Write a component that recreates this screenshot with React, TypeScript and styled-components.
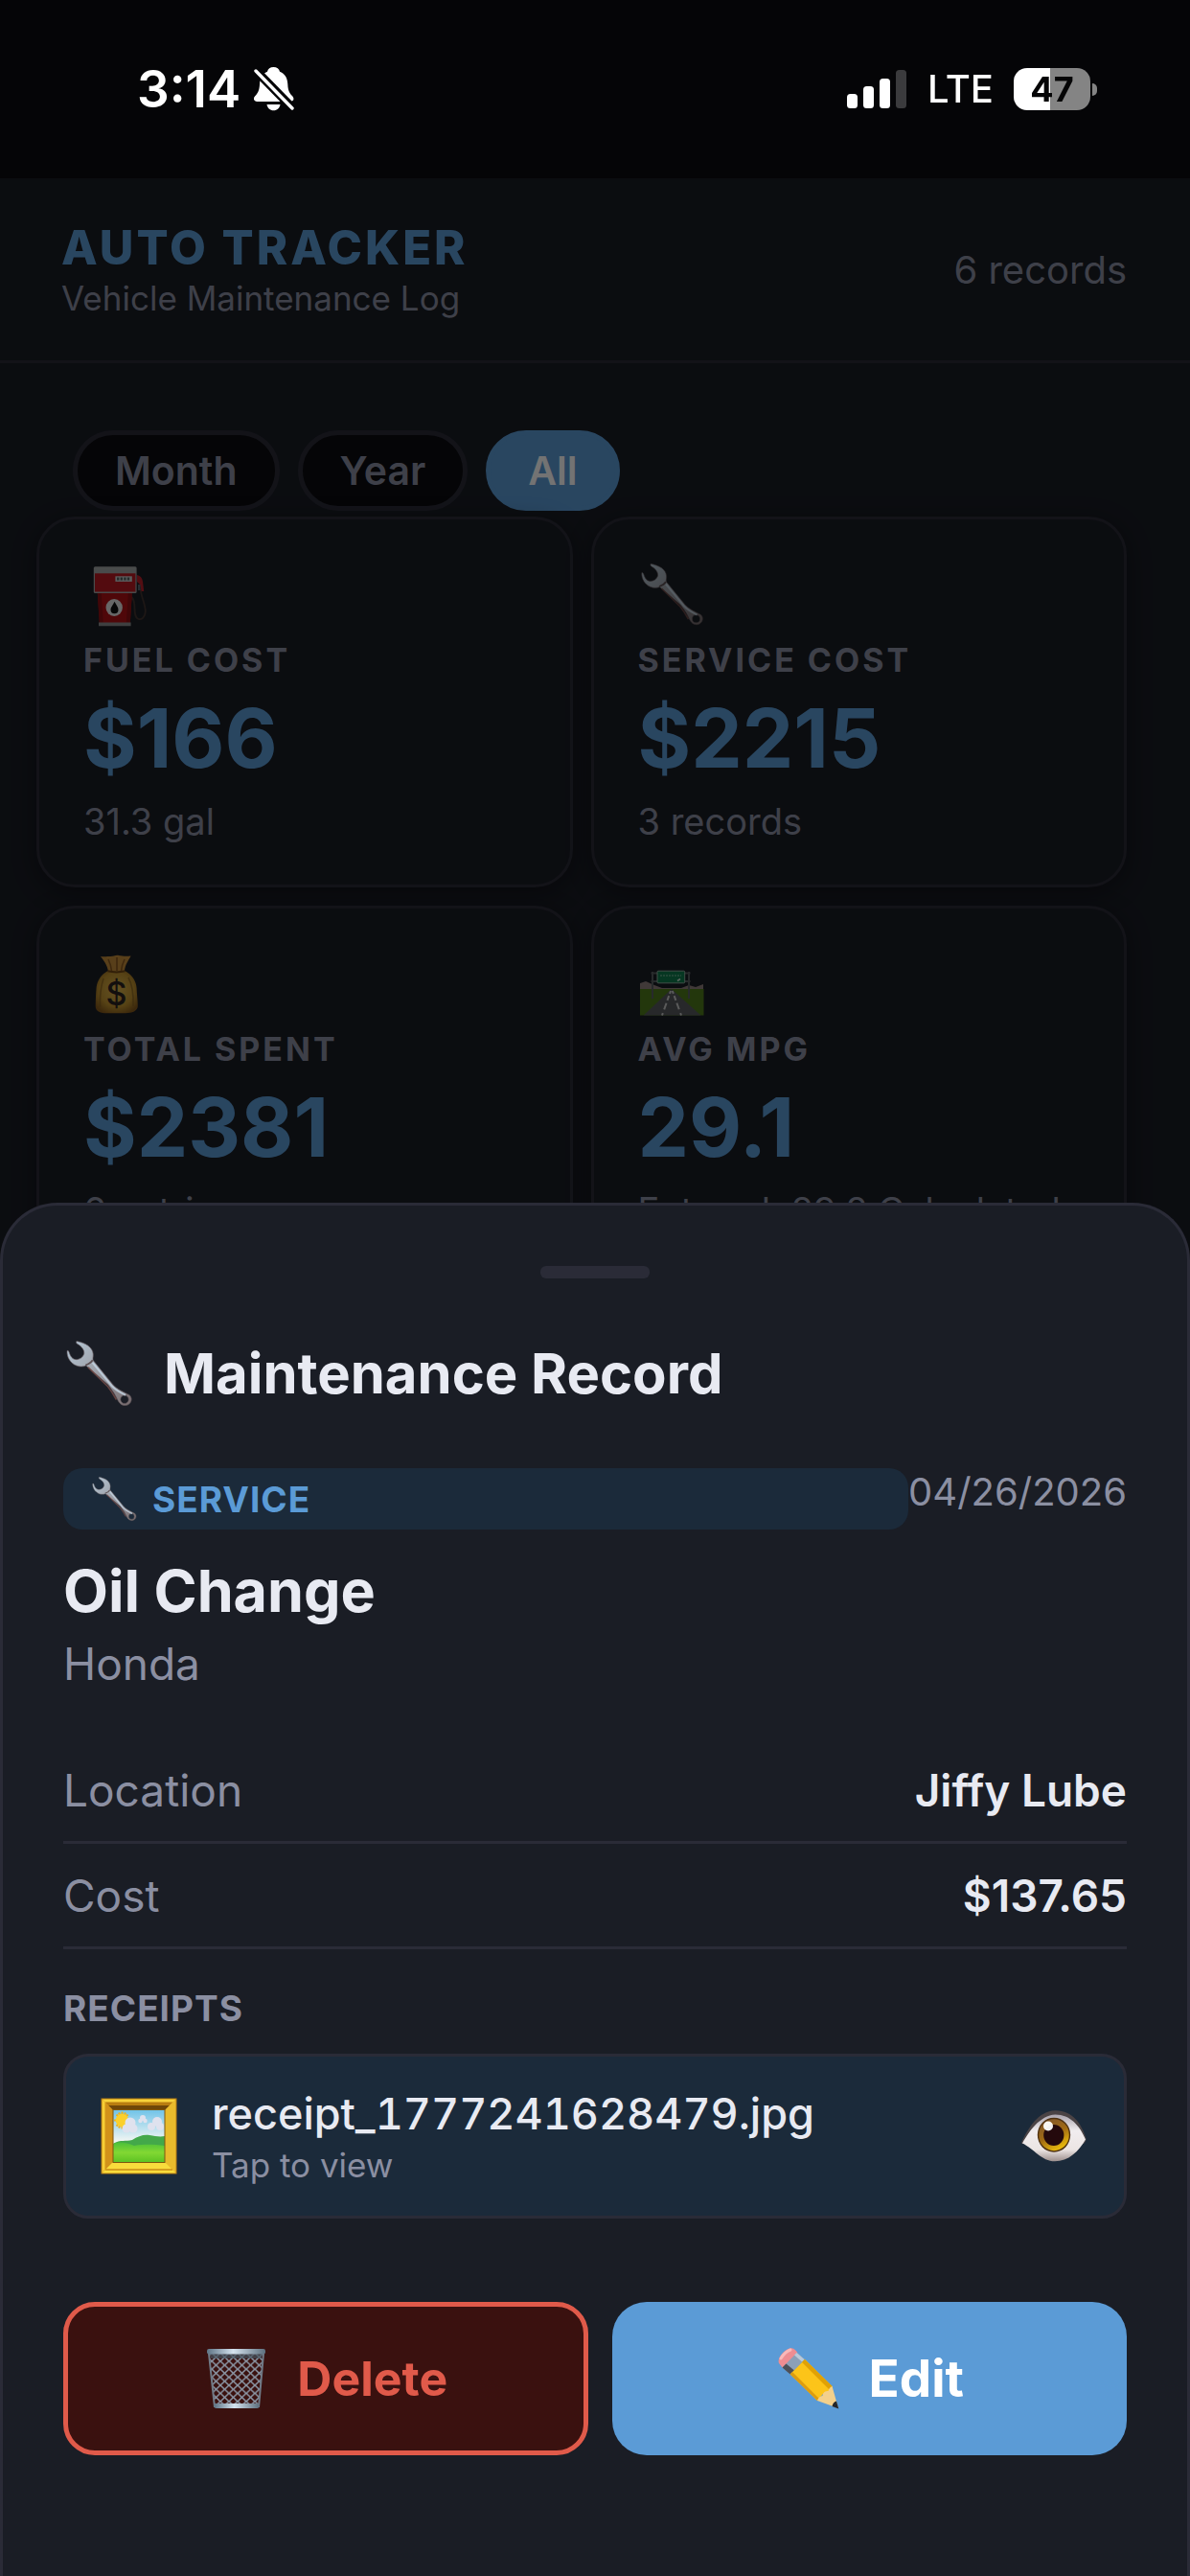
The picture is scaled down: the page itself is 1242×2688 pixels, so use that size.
import { useState } from "react";
import styled, { createGlobalStyle, ThemeProvider } from "styled-components";

const theme = {
  bg: "#0c0c10",
  surface: "#1a1d25",
  tint: "#1b2a3a",
  line: "#2a2b37",
  text: "#e8eaf2",
  muted: "#8b8fa2",
  primary: "#5b9bd6",
  danger: "#e05a4a",
  dangerBg: "#3a110f",
  white: "#ffffff",
};

const GlobalStyle = createGlobalStyle`
  * {
    box-sizing: border-box;
  }
  body {
    margin: 0;
    background: ${theme.bg};
    font-family: Inter, "Liberation Sans", sans-serif;
  }
  h1, h2, h3, p, dl, dd {
    margin: 0;
    font-weight: 400;
  }
  button {
    font-family: inherit;
    margin: 0;
    cursor: pointer;
  }
  svg {
    display: block;
    flex: none;
  }
`;

const Screen = styled.div`
  display: flex;
  flex-direction: column;
  height: 100vh;
  overflow: hidden;
  color: ${({ theme }) => theme.text};
`;
const StatusBar = styled.div`
  position: relative;
  z-index: 2;
  flex: none;
  display: flex;
  justify-content: space-between;
  align-items: center;
  height: 186px;
  padding: 0 97px 0 143px;
  color: ${({ theme }) => theme.white};
`;
const StatusGroup = styled.div<{ $gap: number }>`
  display: flex;
  align-items: center;
  gap: ${({ $gap }) => $gap}px;
`;
const Clock = styled.span`
  font-size: 53px;
  line-height: 60px;
  font-weight: 600;
`;
const Carrier = styled.span`
  font-size: 40px;
  line-height: 50px;
  font-weight: 500;
`;
const Battery = styled.div`
  display: flex;
  align-items: center;
  gap: 2px;
  &::after {
    content: "";
    width: 5px;
    height: 13px;
    border-radius: 0 5px 5px 0;
    background: #848484;
  }
`;
const BatteryLevel = styled.span`
  width: 80px;
  border-radius: 14px;
  background: linear-gradient(90deg, #ffffff 47%, #848484 47%);
  color: #050506;
  font-size: 36px;
  line-height: 44px;
  font-weight: 700;
  text-align: center;
`;

const Page = styled.main`
  flex: 1;
  background: ${({ theme }) => theme.surface};
`;
const Header = styled.header`
  display: flex;
  justify-content: space-between;
  align-items: center;
  padding: 44px 66px 42px 64px;
  border-bottom: 3px solid ${({ theme }) => theme.line};
`;
const AppName = styled.h1`
  font-size: 49px;
  line-height: 58px;
  font-weight: 800;
  letter-spacing: 3px;
  color: ${({ theme }) => theme.primary};
`;
const Tagline = styled.p`
  font-size: 35px;
  line-height: 46px;
  color: ${({ theme }) => theme.muted};
`;
const RecordCount = styled.span`
  font-size: 40px;
  line-height: 50px;
  color: ${({ theme }) => theme.muted};
`;
const Tabs = styled.div`
  display: flex;
  gap: 19px;
  padding: 70px 76px 6px;
`;
const Tab = styled.button<{ $active: boolean }>`
  height: 84px;
  padding: 0 39px;
  border: 5px solid
    ${({ theme, $active }) => ($active ? theme.primary : theme.line)};
  border-radius: 42px;
  background: ${({ theme, $active }) => ($active ? theme.primary : theme.bg)};
  color: ${({ theme, $active }) => ($active ? theme.white : theme.muted)};
  font-size: 41px;
  line-height: 50px;
  font-weight: 600;
`;
const CardGrid = styled.div`
  display: grid;
  grid-template-columns: 1fr 1fr;
  gap: 19px;
  padding: 0 66px 0 38px;
`;
const Card = styled.section`
  display: flex;
  flex-direction: column;
  gap: 12px;
  padding: 43px 46px 40px;
  border: 3px solid ${({ theme }) => theme.line};
  border-radius: 40px;
  background: ${({ theme }) => theme.surface};
  box-shadow: 0 6px 24px rgba(0, 0, 0, 0.35);
`;
const CardLabel = styled.h2`
  font-size: 34px;
  line-height: 44px;
  font-weight: 700;
  letter-spacing: 3px;
  color: ${({ theme }) => theme.muted};
`;
const CardValue = styled.p`
  font-size: 85px;
  line-height: 96px;
  font-weight: 700;
  color: ${({ theme }) => theme.primary};
`;
const CardNote = styled.p`
  font-size: 38px;
  line-height: 52px;
  white-space: nowrap;
  color: ${({ theme }) => theme.muted};
`;

const Backdrop = styled.div`
  position: fixed;
  inset: 0;
  z-index: 1;
  display: flex;
  flex-direction: column;
  justify-content: flex-end;
  background: rgba(0, 0, 0, 0.55);
`;
const Sheet = styled.section`
  padding: 63px 63px 126px;
  border: 3px solid ${({ theme }) => theme.line};
  border-bottom: none;
  border-radius: 60px 60px 0 0;
  background: ${({ theme }) => theme.surface};
`;
const Handle = styled.div`
  width: 114px;
  height: 13px;
  margin: 0 auto 63px;
  border-radius: 6px;
  background: ${({ theme }) => theme.line};
`;
const SheetTitle = styled.h2`
  display: flex;
  align-items: center;
  gap: 31px;
  height: 72px;
  margin-bottom: 63px;
  font-size: 58px;
  line-height: 72px;
  font-weight: 700;
`;
const MetaRow = styled.div`
  display: flex;
  align-items: flex-start;
`;
const Badge = styled.span`
  flex: 1;
  display: flex;
  align-items: center;
  gap: 15px;
  height: 64px;
  padding: 0 28px;
  border-radius: 20px;
  background: ${({ theme }) => theme.tint};
  color: ${({ theme }) => theme.primary};
  font-size: 37px;
  font-weight: 700;
  letter-spacing: 1px;
`;
const DateText = styled.time`
  font-size: 40px;
  line-height: 50px;
  color: ${({ theme }) => theme.muted};
`;
const ServiceName = styled.h3`
  margin-top: 28px;
  font-size: 61px;
  line-height: 72px;
  font-weight: 700;
`;
const Vehicle = styled.p`
  margin-top: 12px;
  font-size: 46px;
  line-height: 56px;
  color: ${({ theme }) => theme.muted};
`;
const Details = styled.dl`
  margin-top: 50px;
`;
const DetailRow = styled.div`
  display: flex;
  justify-content: space-between;
  align-items: center;
  height: 110px;
  border-bottom: 3px solid ${({ theme }) => theme.line};
  font-size: 46px;
  line-height: 56px;
  dt {
    color: ${({ theme }) => theme.muted};
  }
  dd {
    font-weight: 600;
  }
`;
const SectionLabel = styled.h3`
  margin: 40px 0 25px;
  font-size: 37px;
  line-height: 44px;
  font-weight: 700;
  letter-spacing: 1px;
  color: ${({ theme }) => theme.muted};
`;
const ReceiptButton = styled.button`
  display: flex;
  align-items: center;
  gap: 36px;
  width: 100%;
  padding: 30px 36px;
  border: 3px solid ${({ theme }) => theme.line};
  border-radius: 26px;
  background: ${({ theme }) => theme.tint};
  text-align: left;
`;
const ReceiptText = styled.span`
  flex: 1;
  display: flex;
  flex-direction: column;
`;
const FileName = styled.span`
  font-size: 45px;
  line-height: 60px;
  font-weight: 500;
  font-variant-numeric: tabular-nums;
  color: ${({ theme }) => theme.text};
`;
const Hint = styled.span`
  font-size: 35px;
  line-height: 46px;
  color: ${({ theme }) => theme.muted};
`;
const Actions = styled.div`
  display: flex;
  gap: 25px;
  margin-top: 87px;
`;
const ActionButton = styled.button<{ $danger?: boolean }>`
  flex: 1 1 0;
  display: flex;
  justify-content: center;
  align-items: center;
  gap: 28px;
  height: 160px;
  padding: 0 40px;
  border: ${({ theme, $danger }) =>
    $danger ? `5px solid ${theme.danger}` : "none"};
  border-radius: ${({ $danger }) => ($danger ? 33 : 36)}px;
  background: ${({ theme, $danger }) =>
    $danger ? theme.dangerBg : theme.primary};
  color: ${({ theme, $danger }) => ($danger ? theme.danger : theme.white)};
  font-size: ${({ $danger }) => ($danger ? 50 : 53)}px;
  line-height: 60px;
  font-weight: 700;
`;

const BellOffIcon = () => (
  <svg width="42" height="46" viewBox="0 0 42 46" aria-hidden="true">
    <path
      fill="#fff"
      d="M20.5 0c3.400 0 5.900 2 6.500 4.800C33 7.500 35 12 35.300 18c.3 7 2.200 9.500 4.900 12.200 2.400 2.600 1.200 5.800-2.200 5.800H3.400c-3.600 0-4.600-3.400-2.200-5.800C4 27.500 5.700 24.500 6 18c.3-6 2.400-10.500 8-13.200C14.600 2 17 0 20.500 0z"
    />
    <path fill="#fff" d="M13.500 39h14c-.6 3.800-3.300 6.300-7 6.300s-6.400-2.500-7-6.300z" />
    <path d="M-1 .5 43 45.500" stroke="#050507" strokeWidth="9" />
    <path
      d="M2 4 40 43"
      stroke="#fff"
      strokeWidth="3.400"
      strokeLinecap="round"
    />
  </svg>
);

const SignalIcon = () => (
  <svg width="63" height="40" viewBox="0 0 63 40" aria-hidden="true">
    <g fill="#fff">
      <rect x="0" y="25" width="11" height="15" rx="3.500" />
      <rect x="17" y="17" width="11" height="23" rx="3.500" />
      <rect x="34" y="9" width="11" height="31" rx="3.500" />
      <rect x="51" y="0" width="11" height="40" rx="3.500" opacity="0.22" />
    </g>
  </svg>
);

const WrenchIcon = ({ size = 70 }: { size?: number }) => (
  <svg width={size} height={size} viewBox="0 0 70 70" aria-hidden="true">
    <defs>
      <linearGradient id="wrench" x1="0" y1="0" x2="1" y2="1">
        <stop offset="0" stopColor="#b4c8d8" />
        <stop offset="0.35" stopColor="#a3a9b2" />
        <stop offset="0.7" stopColor="#8d8a90" />
        <stop offset="1" stopColor="#75696b" />
      </linearGradient>
    </defs>
    <path
      fill="url(#wrench)"
      stroke="#5f5458"
      strokeWidth="0.6"
      fillRule="evenodd"
      d="M13.200 3.300C22 5 29 9 29.600 16c.2 3-.8 4.500 0 6.300L49 46c4 4.500 10 7 16.500 10.500C70 61 65.500 68 59.500 66.600c-4-.8-5.500-4.600-7.500-8.600-2-4.500-5-8-8-12L22.500 27.500c-3 1.200-6.500 1.200-9.500 0C7 25 3.300 19 3.800 12.700c1.300-.4 1.800.6 2.300 2.300 1 3.200 3 6.200 6.300 6.400 3.600.2 7.100-2.100 8.100-5.700C21 12 18 8.500 14.500 6.500c-1.800-1-2-2.200-1.300-3.200zM60.500 56.800a4 4 0 1 0 .1 8 4 4 0 0 0-.1-8z"
    />
    <path
      d="M29 24.500 48 47.500c4 4.300 8.500 6.500 13.500 9"
      fill="none"
      stroke="#c6d8e8"
      strokeWidth="2"
      opacity="0.75"
    />
    <path
      d="M24.500 29 44 48c3.500 4.300 6 8.500 8.500 13"
      fill="none"
      stroke="#744c48"
      strokeWidth="1.600"
      opacity="0.8"
    />
    <path
      d="M22 27c3-1 5.500-2.500 7-5"
      fill="none"
      stroke="#5c4f52"
      strokeWidth="1.600"
    />
  </svg>
);

const PumpIcon = () => (
  <svg width="70" height="70" viewBox="0 0 70 70" aria-hidden="true">
    <path
      d="M59.500 29c1 10 5.500 17 5.300 24-.2 6-4 9-7.300 8-4.500-1.500-3.800-9-4.200-15-.3-4-1.500-6.500-3-8"
      fill="none"
      stroke="#41332f"
      strokeWidth="1.800"
    />
    <path
      d="M56 15c4 1 5.500 3.500 6 7l1.200 10h-2.600l-1.500-7-3.100-3z"
      fill="#b8202b"
    />
    <path d="M57 25h2.500v6H57z" fill="#5a6470" />
    <rect x="10.800" y="6.300" width="44.800" height="27.700" rx="1.500" fill="#a3a6a6" />
    <rect x="12" y="13.300" width="42.400" height="19.200" fill="#b81a22" />
    <path d="M14.800 34h36l-2 31h-32z" fill="#b01116" />
    <path d="M14.800 34h4l2 31h-4zM46.800 34h4l-2 31h-4z" fill="#8e0f13" />
    <rect x="33.400" y="16.300" width="17.400" height="5.600" fill="#c9cfd0" />
    <path
      d="M35 19.100h14.400"
      stroke="#565f60"
      strokeWidth="3"
      strokeDasharray="2.400 1.200"
    />
    <path d="M16 64.500h33.600v3.800H16z" fill="#8b8d8e" />
    <ellipse cx="32.200" cy="49" rx="8.700" ry="9" fill="#e4e5e5" />
    <path d="M32.500 42.800c2 3.800 4 5.700 4 8.500a4 4 0 0 1-8 0c0-2.800 2.500-4.700 4-8.500z" fill="#111" />
  </svg>
);

const MoneyBagIcon = () => (
  <svg width="70" height="70" viewBox="0 0 70 70" aria-hidden="true">
    <defs>
      <radialGradient id="bag" cx="0.5" cy="0.45" r="0.62">
        <stop offset="0" stopColor="#dcb54e" />
        <stop offset="0.65" stopColor="#bf922f" />
        <stop offset="1" stopColor="#85591b" />
      </radialGradient>
    </defs>
    <path
      fill="#c48d3b"
      d="M18 7c4.500 1 6.500-.5 9.500 0 3 .6 6-1.800 9.500-1 4 .8 7 1.200 12.600.5-3 5.500-6 9-6.700 16H26C25 16 21.500 11.500 18 7z"
    />
    <path
      d="M26 10c2 4 3 8 3.500 12M35 8v14M43 10c-2 4-3 8-3.500 12"
      stroke="#8a5920"
      strokeWidth="1.600"
      fill="none"
    />
    <path
      fill="url(#bag)"
      d="M26 22h17c8 4 12.300 11 12.600 18 .2 6 1.200 13 1.200 18.500 0 5.500-6 7.700-12.800 7.700H25c-7 0-12.600-2-12.300-7.700.2-6 .3-12 .8-17.500C14 33 18 26 26 22z"
    />
    <path
      d="M21 30c-3 9-4 18-3.500 30M47 29c5 9 5.500 18 5 30"
      stroke="#85601f"
      strokeWidth="1.600"
      fill="none"
      opacity="0.7"
    />
    <path d="M25.500 22.300c6 1.500 12 1.500 18 0" stroke="#6f4616" strokeWidth="2" fill="none" />
    <text
      x="34.500"
      y="58"
      textAnchor="middle"
      fontFamily="Inter, sans-serif"
      fontSize="34"
      fontWeight="500"
      fill="#2b2220"
    >
      $
    </text>
  </svg>
);

const RoadIcon = () => (
  <svg width="70" height="70" viewBox="0 0 70 70" aria-hidden="true">
    <path
      d="M2 41v-6l6-2 9 4 8 3h20l8-3 7 2 8-3v5z"
      fill="#8f7f7c"
    />
    <rect x="2" y="41" width="66.500" height="27.500" fill="#4f7a1c" />
    <path d="M34.800 41 5.700 68.500h59.800z" fill="#575a5e" />
    <path
      d="M34 43l-9 25.500M35.800 43l9.200 25.500"
      stroke="#c9c9c9"
      strokeWidth="2"
      strokeDasharray="3 2.500 5 3 7 4"
    />
    <path
      d="M15 23v28M53 23v28M13.500 24.500h41M13.500 33h41"
      stroke="#585d60"
      strokeWidth="2"
    />
    <rect x="20" y="22.200" width="28.700" height="12.600" rx="1" fill="#0f7a4c" stroke="#8fae9d" strokeWidth="1" />
    <path d="M23 27h22" stroke="#5fa583" strokeWidth="1.600" strokeDasharray="2 1" />
    <path d="M41 32.500l3-2" stroke="#c8e0d2" strokeWidth="1.600" />
  </svg>
);

const PictureIcon = () => (
  <svg width="80" height="80" viewBox="0 0 80 80" aria-hidden="true">
    <defs>
      <linearGradient id="sky" x1="0" y1="0" x2="0" y2="1">
        <stop offset="0" stopColor="#6fc3e8" />
        <stop offset="0.6" stopColor="#f2f6f3" />
      </linearGradient>
      <linearGradient id="grass" x1="0" y1="0" x2="0" y2="1">
        <stop offset="0" stopColor="#4bbf3a" />
        <stop offset="0.5" stopColor="#82d833" />
        <stop offset="1" stopColor="#5cc223" />
      </linearGradient>
    </defs>
    <rect x="1" y="1" width="78" height="78" fill="#e2ae22" />
    <path d="M1 1h78L67 13H13z" fill="#b97d10" />
    <path d="M1 1h78l-3 3.500H4.500z" fill="#f7d23a" />
    <path d="M8 8h64l-5 5H13z" fill="#6f4708" />
    <path d="M1 1l12 12v54L1 79z" fill="#d2921a" />
    <path d="M1 1l3.500 3.500v70L1 79z" fill="#f7cf35" />
    <path d="M79 1 67 13v54l12 12z" fill="#e9bb2c" />
    <path d="M1 79l12-12h54l12 12z" fill="#f9dc3c" />
    <path d="M5 75h70" stroke="#c98b14" strokeWidth="1.500" />
    <rect x="1" y="1" width="78" height="78" fill="none" stroke="#b67a12" strokeWidth="1" />
    <rect x="13" y="12.500" width="54" height="55" fill="url(#sky)" />
    <g stroke="#eeb41c" strokeWidth="2">
      <path d="M22.500 14.500v18M14 23.500h17M16.500 17.500l12 12M28.500 17.500l-12 12M19 15.500l7 16M26 15.500l-7 16" />
    </g>
    <circle cx="22.500" cy="23.500" r="6.800" fill="#fbd02b" />
    <g fill="#dfe2ee">
      <circle cx="31" cy="26" r="5.500" />
      <circle cx="27" cy="32" r="4.500" />
      <circle cx="34" cy="32" r="4.500" />
      <circle cx="44" cy="21" r="3" />
      <circle cx="41.500" cy="24" r="2.200" />
      <circle cx="46.500" cy="24" r="2.200" />
      <circle cx="59" cy="25" r="5" />
      <circle cx="53" cy="30" r="4" />
      <circle cx="62" cy="30" r="4" />
    </g>
    <path d="M13 48c8-5 13-2 20-4 6-4 12-6 18-5 6 .8 10 2 16 1v20H13z" fill="#43a84a" />
    <path d="M13 48c8-3 14-1 22 2 12-2 22-1 32 0v17.500H13z" fill="url(#grass)" />
    <rect x="13" y="12.500" width="54" height="55" fill="none" stroke="#7f5710" strokeWidth="1" />
  </svg>
);

const EyeIcon = () => (
  <svg width="74" height="60" viewBox="0 0 74 60" aria-hidden="true">
    <defs>
      <linearGradient id="ball" x1="0" y1="0" x2="0" y2="1">
        <stop offset="0" stopColor="#a9a3ad" />
        <stop offset="0.35" stopColor="#f1edef" />
        <stop offset="0.75" stopColor="#ece5e4" />
        <stop offset="1" stopColor="#9c8f8d" />
      </linearGradient>
      <linearGradient id="iris" x1="0.200" y1="0" x2="0.700" y2="1">
        <stop offset="0" stopColor="#80552a" />
        <stop offset="0.5" stopColor="#a06a14" />
        <stop offset="1" stopColor="#f2c40c" />
      </linearGradient>
    </defs>
    <path
      fill="#4a4345"
      d="M3 37C10 22 20 4 38.500 3.300 56 3 66 17 70.700 33c-.5 3-1.500 3.500-2.700 5H5c-1.500 0-2-.3-2-1z"
    />
    <path
      fill="url(#ball)"
      d="M4 37.500C11 25 22 8.500 38.500 7.500 54 7.500 64 19 70 33.500 63 46 52 56.300 38 56.300 24 56.300 16 43 4 37.500z"
    />
    <ellipse cx="37" cy="28.700" rx="17.200" ry="18" fill="#4f3212" />
    <ellipse cx="37" cy="28.700" rx="15.800" ry="16.500" fill="url(#iris)" />
    <ellipse cx="36.800" cy="29" rx="10.600" ry="11" fill="#24090c" />
    <circle cx="31" cy="19.500" r="5" fill="#fff" opacity="0.95" />
  </svg>
);

const TrashIcon = () => (
  <svg width="70" height="70" viewBox="0 0 70 70" aria-hidden="true">
    <defs>
      <pattern id="mesh" width="9" height="8.400" patternUnits="userSpaceOnUse">
        <path
          d="M0 0l9 8.400M9 0 0 8.400"
          stroke="#8b97a6"
          strokeWidth="1.500"
          fill="none"
        />
      </pattern>
      <linearGradient id="rim" x1="0" y1="0" x2="1" y2="0">
        <stop offset="0" stopColor="#5d7384" />
        <stop offset="0.45" stopColor="#d5e3ef" />
        <stop offset="1" stopColor="#5d6f7d" />
      </linearGradient>
    </defs>
    <path d="M6 9h57l-5 56H12z" fill="url(#mesh)" />
    <path d="M6 9l6 56M63 9l-5 56" stroke="#707a86" strokeWidth="2" />
    <path d="M7 9h55l-1 5H8z" fill="#46545f" opacity="0.7" />
    <rect x="4" y="4" width="61" height="5.500" rx="2" fill="url(#rim)" />
    <rect x="11.500" y="61" width="47" height="5" rx="2" fill="url(#rim)" />
  </svg>
);

const PencilIcon = () => (
  <svg width="70" height="70" viewBox="0 0 70 70" aria-hidden="true">
    <path
      fill="#ee8d92"
      d="M4 19C1.500 13 11 3 17 3.200c3 .2 5 2.600 6.500 5L8 24z"
    />
    <path d="M6 14c3-5 6-7.500 10-9" stroke="#f8b9ba" strokeWidth="3" strokeLinecap="round" fill="none" />
    <path fill="#8ba0b8" d="M23 7.700 31 15 15.700 30.500 7.500 23.500z" />
    <path fill="#4c5058" d="M11.500 19.500 20 26.500l-4.300 4-8.200-7z" />
    <path fill="#b9c9d9" d="M20 10.500l2.500-2.500 8 7-2.500 2.500z" />
    <path fill="#fcc419" d="M31 15 59.500 43 60 49 50 51 44 58 15.700 30.500z" />
    <path fill="#e0a106" d="M31 15 59.500 43 60 50 28 18z" />
    <path fill="#dc9c10" d="M18 28 46 56l-2 2L15.700 30.500z" />
    <path fill="#f3d08b" d="M59.500 43 66 66 44 58c1-3 3-4.500 5.500-5 .5-4 3-5 6-5 .5-2.500 2-4 4-5z" />
    <path fill="#23262b" d="M64 58.500 66.300 66.500 59.500 64c.5-3 2-4.500 4.500-5.500z" />
  </svg>
);

const ranges = ["Month", "Year", "All"];

const stats = [
  { icon: <PumpIcon />, label: "FUEL COST", value: "$166", note: "31.3 gal" },
  {
    icon: <WrenchIcon />,
    label: "SERVICE COST",
    value: "$2215",
    note: "3 records",
  },
  {
    icon: <MoneyBagIcon />,
    label: "TOTAL SPENT",
    value: "$2381",
    note: "6 entries",
  },
  {
    icon: <RoadIcon />,
    label: "AVG MPG",
    value: "29.1",
    note: "Entered: 29.2 Calculated",
  },
];

const details = [
  { label: "Location", value: "Jiffy Lube" },
  { label: "Cost", value: "$137.65" },
];

const App = () => {
  const [range, setRange] = useState("All");

  return (
    <ThemeProvider theme={theme}>
      <GlobalStyle />
      <Screen>
        <StatusBar>
          <StatusGroup $gap={14}>
            <Clock>3:14</Clock>
            <BellOffIcon />
          </StatusGroup>
          <StatusGroup $gap={21}>
            <SignalIcon />
            <Carrier>LTE</Carrier>
            <Battery>
              <BatteryLevel>47</BatteryLevel>
            </Battery>
          </StatusGroup>
        </StatusBar>
        <Page>
          <Header>
            <div>
              <AppName>AUTO TRACKER</AppName>
              <Tagline>Vehicle Maintenance Log</Tagline>
            </div>
            <RecordCount>6 records</RecordCount>
          </Header>
          <Tabs>
            {ranges.map((name) => (
              <Tab
                key={name}
                type="button"
                $active={name === range}
                onClick={() => setRange(name)}
              >
                {name}
              </Tab>
            ))}
          </Tabs>
          <CardGrid>
            {stats.map(({ icon, label, value, note }) => (
              <Card key={label}>
                {icon}
                <CardLabel>{label}</CardLabel>
                <CardValue>{value}</CardValue>
                <CardNote>{note}</CardNote>
              </Card>
            ))}
          </CardGrid>
        </Page>
        <Backdrop>
          <Sheet role="dialog" aria-label="Maintenance Record">
            <Handle />
            <SheetTitle>
              <WrenchIcon size={74} />
              Maintenance Record
            </SheetTitle>
            <MetaRow>
              <Badge>
                <WrenchIcon size={50} />
                SERVICE
              </Badge>
              <DateText dateTime="2026-04-26">04/26/2026</DateText>
            </MetaRow>
            <ServiceName>Oil Change</ServiceName>
            <Vehicle>Honda</Vehicle>
            <Details>
              {details.map(({ label, value }) => (
                <DetailRow key={label}>
                  <dt>{label}</dt>
                  <dd>{value}</dd>
                </DetailRow>
              ))}
            </Details>
            <SectionLabel>RECEIPTS</SectionLabel>
            <ReceiptButton type="button">
              <PictureIcon />
              <ReceiptText>
                <FileName>receipt_1777241628479.jpg</FileName>
                <Hint>Tap to view</Hint>
              </ReceiptText>
              <EyeIcon />
            </ReceiptButton>
            <Actions>
              <ActionButton type="button" $danger>
                <TrashIcon />
                Delete
              </ActionButton>
              <ActionButton type="button">
                <PencilIcon />
                Edit
              </ActionButton>
            </Actions>
          </Sheet>
        </Backdrop>
      </Screen>
    </ThemeProvider>
  );
};

export default App;
